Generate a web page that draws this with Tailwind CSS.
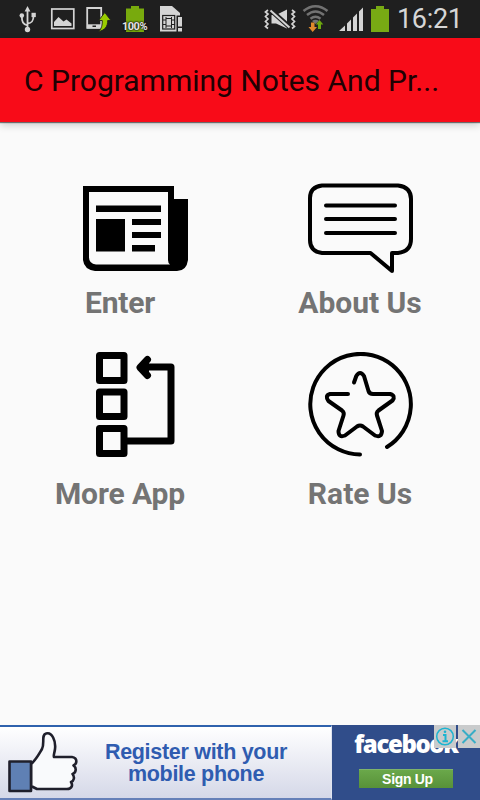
<!DOCTYPE html>
<html lang="en">
<head>
  <meta charset="UTF-8">
  <meta name="viewport" content="width=device-width, initial-scale=1.0">
  <title>C Programming Notes And Programs</title>
  <script src="https://cdn.jsdelivr.net/npm/@tailwindcss/browser@4"></script>
</head>
<body class="bg-[#fafafa]">
  <div class="w-[480px] h-[800px] flex flex-col overflow-hidden bg-[#fafafa] font-['Roboto',sans-serif]">

    <!-- status bar -->
    <div class="h-[38px] shrink-0 flex items-center justify-between pl-[18px] pr-[17px] bg-[#1f1f1f]">
      <div class="flex items-center">
        <svg class="w-[20px] h-[38px]" viewBox="18 0 20 38" fill="none" stroke="#d4d4d4" stroke-width="1.800">
          <path d="M27.500 9V29M27.500 25.500C23 24 21.800 22 21.800 16M27.500 23.500C32 23 33.500 21 33.500 16"/>
          <path d="M27.500 6L30.400 11.500H24.600Z" fill="#d4d4d4" stroke="none"/>
          <circle cx="21.800" cy="15.500" r="2.300" fill="#d4d4d4" stroke="none"/>
          <rect x="31.500" y="12.800" width="4.300" height="4.300" fill="#d4d4d4" stroke="none"/>
          <circle cx="27.500" cy="29.500" r="2.700" fill="#d4d4d4" stroke="none"/>
        </svg>
        <svg class="w-[26px] h-[38px] ml-[12px]" viewBox="50 0 26 38">
          <rect x="51.800" y="9" width="22" height="19.500" fill="none" stroke="#d4d4d4" stroke-width="1.700"/>
          <path d="M54 26V22L58.500 17L63.500 21.500L66.500 19.500L71.500 23.500V26Z" fill="#d4d4d4"/>
        </svg>
        <svg class="w-[26px] h-[38px] ml-[10px]" viewBox="86 0 26 38">
          <path d="M87.200 8H101.200V27.800H87.200Z" fill="none" stroke="#d4d4d4" stroke-width="1.800"/>
          <path d="M87 24.300H101V28.500H87Z" fill="#d4d4d4"/>
          <path d="M92.500 25.500H96V27H92.500Z" fill="#1f1f1f"/>
          <path d="M104.800 12.500L111 20.500H107.700C107.800 26.500 105 30.300 98.500 31.500C101.800 28.500 102.300 25 102.200 20.500H98.600Z" fill="#99cc00" stroke="#1f1f1f" stroke-width="0.900"/>
        </svg>
        <div class="relative w-[28px] h-[38px] ml-[9px]">
          <svg class="w-[28px] h-[38px]" viewBox="121 0 28 38">
            <path d="M126 8.500H131V6H139V8.500H144V32H126Z" fill="#78aa0d"/>
          </svg>
          <span class="absolute left-[1px] top-[21px] text-[11px] leading-[12px] font-bold tracking-[-0.500px] text-[#e4e4e4] [text-shadow:0_0_2px_#111,0_0_2px_#111,0_0_1px_#111]">100%</span>
        </div>
        <svg class="w-[26px] h-[38px] ml-[9px]" viewBox="158 0 26 38">
          <path d="M160 6H172L180 13V31.500H160Z" fill="#d4d4d4"/>
          <rect x="162.700" y="15.500" width="12" height="13.500" fill="none" stroke="#1f1f1f" stroke-width="1.200"/>
          <path d="M166 17V28M171.500 17V28M166 18.500H171.500M166 26H171.500M163 20H166M163 24.500H166M171.500 20H175M171.500 24.500H175" stroke="#1f1f1f" stroke-width="1"/>
          <path d="M176.500 15.500H183.500V32H176.500Z" fill="#1f1f1f"/>
          <path d="M178 17H182V26.500H178ZM178 28H182V31.500H178Z" fill="#d4d4d4"/>
        </svg>
      </div>

      <div class="flex items-center">
        <svg class="w-[32px] h-[38px]" viewBox="264 0 32 38">
          <path d="M271.500 15H276L287 9.500V28.500L276 23.500H271.500Z" fill="#d4d4d4"/>
          <path d="M270 9.500L290 27.500" stroke="#1f1f1f" stroke-width="5"/>
          <path d="M270.500 10.500L289.500 27.500" stroke="#d4d4d4" stroke-width="2"/>
          <path d="M268 10L265.500 12L268 14L265.500 16.500L268 19L265.500 21.500L268 24L265.500 26.500L268 28.500M292 10L294.500 12L292 14L294.500 16.500L292 19L294.500 21.500L292 24L294.500 26.500L292 28.500" fill="none" stroke="#d4d4d4" stroke-width="1.700"/>
        </svg>
        <svg class="w-[28px] h-[38px] ml-[6px]" viewBox="302 0 28 38">
          <path d="M303.500 11C311 4.500 320 4.500 327.500 11M307 15C312.500 10.500 318.500 10.500 324 15M310.500 18.800C314 16 317 16 320.500 18.800" fill="none" stroke="#727272" stroke-width="2.500"/>
          <path d="M312 21Q315.500 18.500 319 21L315.500 24Z" fill="#727272"/>
          <path d="M311 22.500H314.500V27H317L312.700 32L308.500 27H311Z" fill="#e08a2c"/>
          <path d="M318 29V24.500H315.800L319.500 20L323.300 24.500H321V29Z" fill="#6da80f"/>
        </svg>
        <svg class="w-[25px] h-[38px] ml-[9px]" viewBox="339 0 25 38" fill="#d4d4d4">
          <path d="M339 31L345 25.500V31ZM347 23.500L351 19.500V31H347ZM353 17.500L357 13.500V31H353ZM359 11.500L363 7.500V31H359Z"/>
        </svg>
        <svg class="w-[18px] h-[38px] ml-[7px]" viewBox="371 0 18 38">
          <path d="M371 9H376V6H384V9H389V32H371Z" fill="#78aa14"/>
        </svg>
        <span class="ml-[8px] w-[66px] text-[27px] leading-[38px] tracking-[-0.300px] text-[#d6d6d6] whitespace-nowrap">16:21</span>
      </div>
    </div>

    <!-- app bar -->
    <header class="h-[84px] shrink-0 flex items-center px-6 pt-[2px] bg-[#f80b18] shadow-[0_1px_1px_rgba(0,0,0,0.500),0_3px_8px_rgba(0,0,0,0.200)]">
      <h1 class="text-[30px] leading-[36px] text-[#200103] whitespace-nowrap">C Programming Notes And Pr...</h1>
    </header>

    <!-- menu -->
    <main class="flex-1 grid grid-cols-2 content-start pt-[54px]">
      <div class="h-[176px] flex flex-col items-center">
        <svg class="w-[105px] h-[105px] ml-[31px]" viewBox="83 176 105 105">
          <path d="M83 186H174V199H188V260Q186.500 271 177 271H95Q84 269.500 83 260Z"/>
          <path d="M89 192H168V260Q168 263 170 264.500H96Q89 263.500 89 257.500Z" fill="#fafafa"/>
          <path d="M96 205.500H161V212H96ZM96 219H125V251.500H96ZM132 219H161V225H132ZM132 232H161V238H132ZM132 245H155V251.500H132Z"/>
        </svg>
        <span class="mt-[4px] text-[30px] leading-[36px] font-bold tracking-[-0.200px] text-[#747474]">Enter</span>
      </div>
      <div class="h-[176px] flex flex-col items-center">
        <svg class="w-[105px] h-[105px]" viewBox="308 176 105 105" fill="none" stroke="#000" stroke-width="4" stroke-linecap="round" stroke-linejoin="round">
          <path d="M322 185.500H398Q411 187 411 199V239Q411 251.500 398 253H392V271L370.500 253H322Q310 251.500 310 240V198Q310 187 322 185.500Z"/>
          <path d="M326 205.500H395M326 219H395M326 233H395"/>
        </svg>
        <span class="mt-[4px] text-[30px] leading-[36px] font-bold text-[#747474]">About Us</span>
      </div>
      <div class="h-[176px] flex flex-col items-center">
        <svg class="w-[105px] h-[105px] ml-[31px]" viewBox="83 352 105 105" fill="none" stroke="#000" stroke-width="7" stroke-linecap="round" stroke-linejoin="round">
          <path d="M99.500 355.500H124V380.500H99.500ZM99.500 392H124V416.500H99.500ZM99.500 428.500H124V453.500H99.500Z"/>
          <path d="M127 441H171V367H141M147.500 359.500L140 367.500L147.500 375.500"/>
          <path d="M139.500 367.500L147.500 360V375Z" stroke-width="3" fill="#000"/>
        </svg>
        <span class="mt-[19px] text-[30px] leading-[36px] font-bold tracking-[-0.100px] text-[#747474]">More App</span>
      </div>
      <div class="h-[176px] flex flex-col items-center">
        <svg class="w-[105px] h-[105px]" viewBox="308 352 105 105" fill="none" stroke="#000" stroke-width="4" stroke-linecap="round" stroke-linejoin="round">
          <path d="M360 454.500A50.300 50.300 0 1 1 387 447"/>
          <path d="M354 382.500L356.300 376Q360 370 364 376L368.500 391Q369.500 394 373 394H390Q396 395.500 392.500 400.500L378.500 410.500Q376 412.500 377 415.500L382 431Q381.500 438 375 435.500L363 426.500Q360 424.500 357 426.500L345 435.500Q338.500 438 338.500 431L343.500 415.500Q344.500 412.500 342 410.500L328.500 401Q324.500 395.500 330 394H348"/>
        </svg>
        <span class="mt-[19px] text-[30px] leading-[36px] font-bold text-[#747474]">Rate Us</span>
      </div>
    </main>

    <!-- banner ad -->
    <footer class="relative h-[75px] shrink-0 flex bg-[#304d8a] font-['Liberation_Sans',sans-serif]">
      <div class="w-[332px] flex items-center border-t-2 border-b-2 border-r border-t-[#2f62ad] border-b-[#6680b8] border-r-[#dfe4f0] bg-linear-to-b from-white to-[#d5d8e8]">
        <svg class="w-[80px] h-[71px]" viewBox="0 727 80 71" stroke="#1f1f2b" stroke-width="2.600" stroke-linejoin="round">
          <path d="M31 764C36 760 39 754 42 749C45 743 41 735 46 733.500C52 731.500 56 741 55 749C54.500 753 53 756.500 54 757H72C78 758 77 764 73.500 765.500C77 768 76 773 72.500 774C75 777 74 781 71 782C73 785 72 789 67 789H37L31 786Z" fill="#f9fafc"/>
          <path d="M9.500 761.500H31V791H9.500Z" fill="#5f80b4"/>
        </svg>
        <div class="w-[232px] text-center text-[21.500px] leading-[22px] font-bold tracking-[-0.300px] text-[#2f5cb0] whitespace-nowrap">
          Register with your<br>mobile phone
        </div>
      </div>
      <div class="flex-1 flex flex-col items-center">
        <span class="mt-[5px] h-[28px] text-[24px] leading-[28px] font-extrabold font-['Open_Sans',sans-serif] tracking-[-1.400px] text-white">facebook</span>
        <span class="mt-[11px] w-[94px] h-[19px] text-center text-[14px] leading-[18px] font-bold tracking-[-0.300px] text-white bg-linear-to-b from-[#6aa84a] to-[#589139] border-t border-[#7fb36a]"><span class="pl-[3px]">Sign Up</span></span>
      </div>
      <div class="absolute right-0 top-0 flex gap-[2px]">
        <svg class="w-[22px] h-[23px] bg-[#c9cbcc]" viewBox="0 0 22 23" fill="none" stroke="#1cb4d0" stroke-width="1.500">
          <circle cx="11" cy="11.500" r="8.300"/>
          <path d="M9 10H11.500V16M8.500 16.300H14" stroke-width="2"/>
          <circle cx="11" cy="6.800" r="1.300" fill="#1cb4d0" stroke="none"/>
        </svg>
        <svg class="w-[22px] h-[23px] bg-[#c9cbcc]" viewBox="0 0 22 23" fill="none" stroke="#38adc6" stroke-width="2">
          <path d="M4.500 5L17.500 18M17.500 5L4.500 18"/>
        </svg>
      </div>
    </footer>
  </div>
</body>
</html>
